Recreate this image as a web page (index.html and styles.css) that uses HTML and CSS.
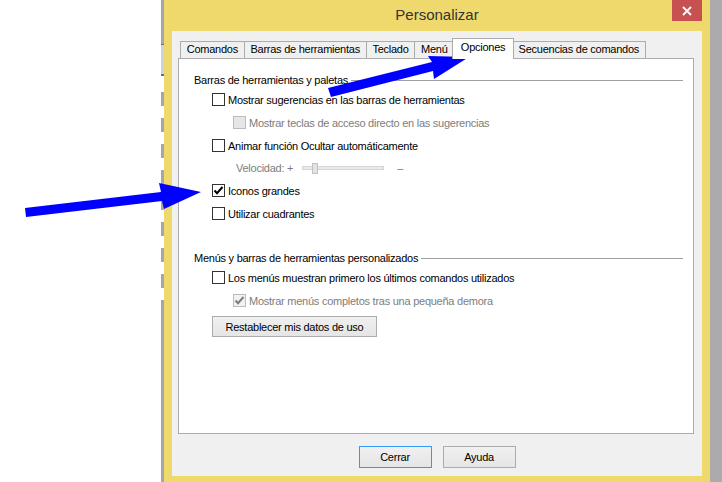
FILE: index.html
```html
<!DOCTYPE html>
<html lang="es">
<head>
    <meta charset="UTF-8">
    <meta name="viewport" content="width=device-width, initial-scale=1.0">
    <title>Personalizar</title>
    <link rel="stylesheet" href="styles.css">
</head>
<body>
    <div class="desktop-left"></div>
    <div class="behind-edge"></div>

    <div class="window">
        <div class="titlebar">
            <span></span>
            <span class="title">Personalizar</span>
            <span class="close-btn">
                <svg width="10" height="10" viewBox="0 0 10 10"><path d="M1 1 L9 9 M9 1 L1 9" stroke="#fff" stroke-width="1.8"/></svg>
            </span>
        </div>

        <div class="client">
            <div class="tabs">
                <div class="tab">Comandos</div>
                <div class="tab">Barras de herramientas</div>
                <div class="tab">Teclado</div>
                <div class="tab">Menú</div>
                <div class="tab active">Opciones</div>
                <div class="tab">Secuencias de comandos</div>
            </div>

            <div class="tab-panel">
                <div class="group-title first">
                    <span>Barras de herramientas y paletas</span>
                    <span class="rule"></span>
                </div>

                <div class="row lvl1">
                    <span class="check"></span>
                    <span>Mostrar sugerencias en las barras de herramientas</span>
                </div>
                <div class="row lvl2 disabled">
                    <span class="check"></span>
                    <span>Mostrar teclas de acceso directo en las sugerencias</span>
                </div>
                <div class="row lvl1">
                    <span class="check"></span>
                    <span>Animar función Ocultar automáticamente</span>
                </div>
                <div class="row speed disabled">
                    <span>Velocidad: +</span>
                    <span class="slider"><span class="thumb"></span></span>
                    <span>–</span>
                </div>
                <div class="row lvl1">
                    <span class="check checked">
                        <svg width="11" height="11" viewBox="0 0 11 11"><path d="M1.5 5.5 L4 8.2 L9.5 2" fill="none" stroke="#000" stroke-width="2"/></svg>
                    </span>
                    <span>Iconos grandes</span>
                </div>
                <div class="row lvl1">
                    <span class="check"></span>
                    <span>Utilizar cuadrantes</span>
                </div>

                <div class="group-title second">
                    <span>Menús y barras de herramientas personalizados</span>
                    <span class="rule"></span>
                </div>

                <div class="row lvl1">
                    <span class="check"></span>
                    <span>Los menús muestran primero los últimos comandos utilizados</span>
                </div>
                <div class="row lvl2 disabled">
                    <span class="check checked">
                        <svg width="11" height="11" viewBox="0 0 11 11"><path d="M1.5 5.5 L4 8.2 L9.5 2" fill="none" stroke="#7d7d7d" stroke-width="2"/></svg>
                    </span>
                    <span>Mostrar menús completos tras una pequeña demora</span>
                </div>

                <button class="btn reset-btn">Restablecer mis datos de uso</button>
            </div>

            <div class="footer">
                <button class="btn default">Cerrar</button>
                <button class="btn">Ayuda</button>
            </div>
        </div>
    </div>

    <div class="right-shade"></div>

    <!-- flechas de anotación -->
    <svg class="arrows" width="722" height="482" viewBox="0 0 722 482">
        <polygon fill="#0000ff" points="328,88 432,62 428,56 469,57 434,79 433,71 331,97"/>
        <polygon fill="#0000ff" points="25,208 161,192 159,183 201,192 164,209 162,201 26,217"/>
    </svg>
</body>
</html>
```

FILE: styles.css
```css
body {
    margin: 0;
    height: 482px;
    overflow: hidden;
    display: flex;
    background: #fff;
    font-family: "Segoe UI", "Liberation Sans", Arial, sans-serif;
    font-size: 11px;
    letter-spacing: -0.25px;
    color: #000;
}

.desktop-left {
    width: 161px;
    background: #fff;
}

.behind-edge {
    width: 3px;
    background:
        linear-gradient(to bottom, #a6a6a6 0 44px, #6f6f6f 44px 45px, #c8d4e2 45px 74px, #6f6f6f 74px 76px, transparent 76px) 0 0 / 100% 80px no-repeat,
        linear-gradient(#a6a6a6, #a6a6a6) 0 310px / 100% 172px no-repeat,
        repeating-linear-gradient(to bottom, #fff 0 12px, #a6a6a6 12px 26px) 0 80px / 100% 230px no-repeat;
}

.window {
    width: 546px;
    display: flex;
    flex-direction: column;
    background: #f0d96c;
}

.titlebar {
    height: 31px;
    display: grid;
    grid-template-columns: 38px 1fr 30px;
    padding-right: 8px;
}

.title {
    text-align: center;
    font-size: 15px;
    letter-spacing: 0;
    line-height: 30px;
    color: #333;
}

.close-btn {
    height: 21px;
    background: #c75050;
    display: flex;
    align-items: center;
    justify-content: center;
}

.client {
    flex: 1;
    margin: 0 8px 6px 8px;
    padding: 7px 8px 0 6px;
    background: #f0f0f0;
    display: flex;
    flex-direction: column;
}

.tabs {
    height: 20px;
    display: flex;
    align-items: flex-end;
    padding-left: 2px;
}

.tab {
    height: 17px;
    box-sizing: border-box;
    padding: 0 5.75px;
    line-height: 15px;
    border: 1px solid #acacac;
    border-bottom: none;
    background: #f0f0f0;
    margin-left: -1px;
    white-space: nowrap;
}

.tab:first-child {
    margin-left: 0;
}

.tab.active {
    height: 21px;
    margin: 0 -1px -1px -2px;
    padding: 0 7.5px;
    line-height: 17px;
    background: #fff;
    position: relative;
    z-index: 1;
}

.tab-panel {
    flex: 1;
    background: #fff;
    border: 1px solid #acacac;
    padding: 0 10px 0 15px;
}

.group-title {
    height: 16px;
    display: flex;
    align-items: center;
    gap: 3px;
}

.group-title.first {
    margin-top: 13px;
}

.group-title.second {
    margin-top: 25px;
}

.rule {
    flex: 1;
    border-top: 1px solid #a0a0a0;
}

.row {
    height: 23px;
    display: flex;
    align-items: center;
    gap: 3px;
    white-space: nowrap;
}

.lvl1 {
    padding-left: 18px;
}

.lvl2 {
    padding-left: 39px;
}

.disabled {
    color: #7d7d7d;
}

.check {
    width: 13px;
    height: 13px;
    box-sizing: border-box;
    border: 1px solid #333;
    background: #fff;
    display: flex;
    align-items: center;
    justify-content: center;
}

.disabled .check {
    border-color: #bcbcbc;
    background: #e6e6e6;
}

.disabled .check.checked {
    background: #f2f2f2;
}

.speed {
    height: 22px;
    padding-left: 42px;
    gap: 0;
}

.slider {
    width: 82px;
    height: 4px;
    box-sizing: border-box;
    margin: 0 13px 0 9px;
    background: #e7eaea;
    border: 1px solid #d6d6d6;
    display: flex;
    align-items: center;
}

.thumb {
    width: 6px;
    height: 11px;
    margin-left: 9px;
    box-sizing: border-box;
    background: #e3e3e3;
    border: 1px solid #c2c2c2;
}

.btn {
    font-family: inherit;
    font-size: 11px;
    letter-spacing: -0.25px;
    color: #000;
    height: 22px;
    padding: 0;
    border: 1px solid #acacac;
    background: linear-gradient(#f0f0f0, #e5e5e5);
}

.reset-btn {
    width: 165px;
    height: 21px;
    margin: 4px 0 0 18px;
}

.footer {
    height: 42px;
    box-sizing: border-box;
    padding-top: 12px;
    display: flex;
    justify-content: center;
    gap: 11px;
    margin-left: 2px;
}

.footer .btn {
    width: 73px;
}

.btn.default {
    border-color: #3399ff;
}

.right-shade {
    flex: 1;
    background: #ababab;
}

.arrows {
    position: absolute;
    left: 0;
    top: 0;
    pointer-events: none;
}
```
